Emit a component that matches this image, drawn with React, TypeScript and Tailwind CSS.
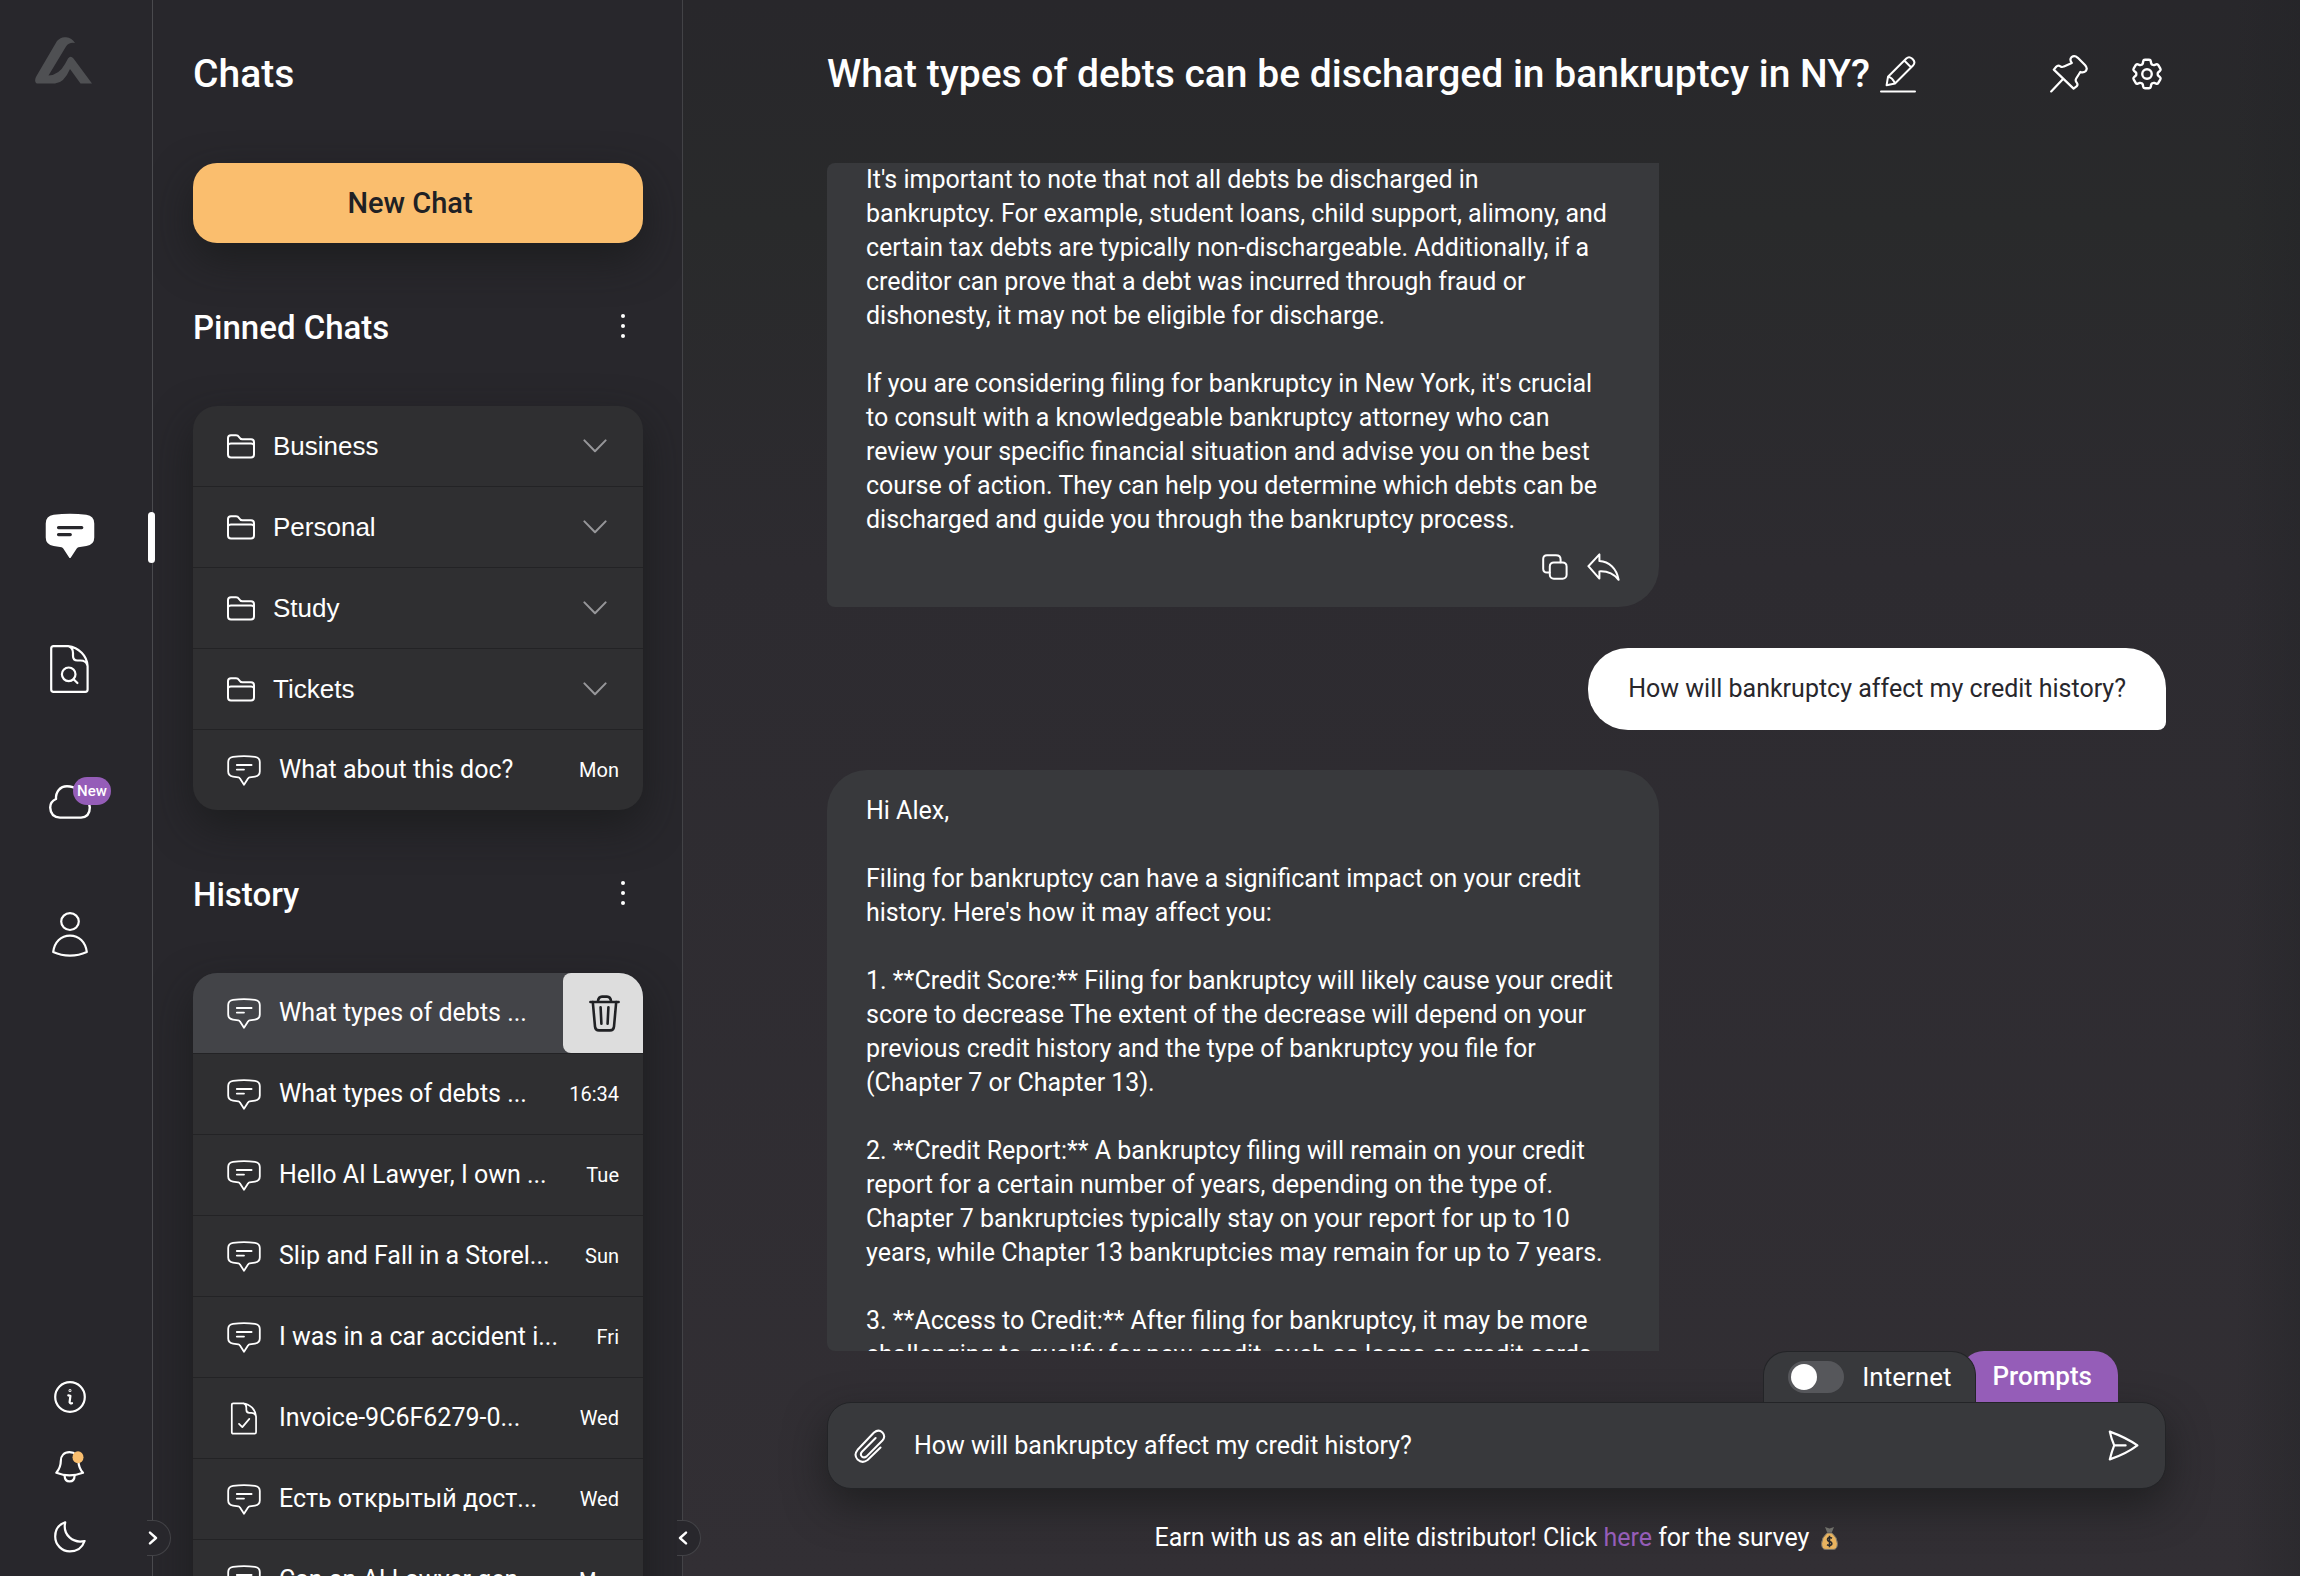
import { useState } from 'react';
import { HiOutlineCog6Tooth } from 'react-icons/hi2';

type IconKind = 'chat' | 'doc';

interface HistoryItem {
  title: string;
  date: string;
  icon: IconKind;
}

const FOLDERS = ['Business', 'Personal', 'Study', 'Tickets'];

const HISTORY: HistoryItem[] = [
  { title: 'What types of debts ...', date: '', icon: 'chat' },
  { title: 'What types of debts ...', date: '16:34', icon: 'chat' },
  { title: 'Hello AI Lawyer, I own ...', date: 'Tue', icon: 'chat' },
  { title: 'Slip and Fall in a Storel...', date: 'Sun', icon: 'chat' },
  { title: 'I was in a car accident i...', date: 'Fri', icon: 'chat' },
  { title: 'Invoice-9C6F6279-0...', date: 'Wed', icon: 'doc' },
  { title: 'Есть открытый дост...', date: 'Wed', icon: 'chat' },
  { title: 'Can an AI Lawyer gen...', date: 'Mon', icon: 'chat' },
];

const FIRST_ANSWER = `It's important to note that not all debts be discharged in
bankruptcy. For example, student loans, child support, alimony, and
certain tax debts are typically non-dischargeable. Additionally, if a
creditor can prove that a debt was incurred through fraud or
dishonesty, it may not be eligible for discharge.

If you are considering filing for bankruptcy in New York, it's crucial
to consult with a knowledgeable bankruptcy attorney who can
review your specific financial situation and advise you on the best
course of action. They can help you determine which debts can be
discharged and guide you through the bankruptcy process.`;

const SECOND_ANSWER = `Hi Alex,

Filing for bankruptcy can have a significant impact on your credit
history. Here's how it may affect you:

1. **Credit Score:** Filing for bankruptcy will likely cause your credit
score to decrease The extent of the decrease will depend on your
previous credit history and the type of bankruptcy you file for
(Chapter 7 or Chapter 13).

2. **Credit Report:** A bankruptcy filing will remain on your credit
report for a certain number of years, depending on the type of.
Chapter 7 bankruptcies typically stay on your report for up to 10
years, while Chapter 13 bankruptcies may remain for up to 7 years.

3. **Access to Credit:** After filing for bankruptcy, it may be more
challenging to qualify for new credit, such as loans or credit cards.`;

const stroke = {
  fill: 'none',
  stroke: 'currentColor',
  strokeLinecap: 'round',
  strokeLinejoin: 'round',
} as const;

const BUBBLE =
  'M6 1.8Q17 .4 28 1.8Q32.8 2.5 32.8 7V16.5Q32.8 20.8 28 21.6Q24 22.2 22.6 22.4Q21.6 22.6 21 23.6L17 29.8L13 23.6Q12.4 22.6 11.4 22.4Q10 22.2 6 21.6Q1.2 20.8 1.2 16.5V7Q1.2 2.5 6 1.8Z';

function Logo() {
  return (
    <svg width="57" height="47" viewBox="0 0 57 47" fill="#4f5053" role="img" aria-label="AI Lawyer">
      <path d="M1 46Q-1 43 1.5 39L22 4Q26 -.5 31 .3Q37 1 40 6Q34 5 31 9.5L13.5 38.5Q24 38 30 27L33 21.5Q35.5 18 38.5 21.5L57 46.5H45.5L35 32Q29 46 20 46.5H3Q2 46.5 1 46Z" />
    </svg>
  );
}

function ChatFilledIcon() {
  return (
    <svg width="50" height="46" viewBox="0 0 34 31">
      <path d={BUBBLE} fill="#fff" stroke="#fff" strokeWidth="1.4" strokeLinejoin="round" />
      <path d="M9.2 9.8H25M9.2 14.5H17.2" stroke="#28272c" strokeWidth="2.2" strokeLinecap="round" />
    </svg>
  );
}

function ChatIcon() {
  return (
    <svg width="34" height="31" viewBox="0 0 34 31" strokeWidth="1.8" {...stroke}>
      <path d={BUBBLE} />
      <path d="M9.8 10H24.6M9.8 14.6H17" />
    </svg>
  );
}

const SHEET =
  'M3.5 1.2H18C29 2.5 37 11 37.6 21V44.5Q37.6 46.8 35.3 46.8H3.5Q1.2 46.8 1.2 44.5V3.5Q1.2 1.2 3.5 1.2ZM19 1.5Q23 3 23 8V11Q23 15.5 27.5 15.5H30.5Q36 15.5 37.4 20.5';

function DocSearchIcon() {
  return (
    <svg width="40" height="48" viewBox="0 0 40 48" strokeWidth="2.2" {...stroke}>
      <path d={SHEET} />
      <circle cx="18.7" cy="29.3" r="6.8" />
      <path d="M23.6 34.2L27.4 38" />
    </svg>
  );
}

function DocCheckIcon() {
  return (
    <svg width="34" height="33" viewBox="-6 0 51 48" strokeWidth="2.6" {...stroke}>
      <path d={SHEET} />
      <path d="M12 32L17 37L27.5 24.5" />
    </svg>
  );
}

function CloudIcon() {
  return (
    <svg width="42" height="34" viewBox="0 0 42 34" strokeWidth="2.4" {...stroke}>
      <path d="M11 32.6H32Q40.8 32 40.8 22.5Q40 15 34 13C33 6 26 1.2 18 1.2C11 1.2 6.6 7 7 14Q1.2 16.5 1.2 22.5Q1.5 32 11 32.6Z" />
    </svg>
  );
}

function UserIcon() {
  return (
    <svg width="36" height="45" viewBox="0 0 36 45" strokeWidth="2.2" {...stroke}>
      <ellipse cx="18" cy="9.6" rx="8.8" ry="8.4" />
      <path d="M1.2 40C2.5 30 9 23.6 18 23.6C27 23.6 33.5 30 34.8 40Q27 43.6 18 43.6Q9 43.6 1.2 40Z" />
    </svg>
  );
}

function InfoIcon() {
  return (
    <svg width="32" height="32" viewBox="0 0 32 32" strokeWidth="2.2" {...stroke}>
      <circle cx="16" cy="16" r="14.8" />
      <circle cx="16" cy="9.6" r="0.4" />
      <path d="M14.3 14.4L16.4 14.8L15.6 21.2Q16 22.8 18 22.2" />
    </svg>
  );
}

function BellIcon() {
  return (
    <svg width="30" height="32" viewBox="0 0 30 32" strokeWidth="2.2" {...stroke}>
      <path d="M14.5 1.2C9 1.2 5.8 5 5.8 10C5.8 16 4 18.5 1.4 21.8Q8 24.4 14.5 24.4Q21 24.4 28 21.8C25 18.5 23.6 15 23.4 10C23.4 5 20 1.2 14.5 1.2Z" />
      <path d="M9.6 24.6Q9.8 30.4 14.6 30.4Q19.4 30.4 19.6 24.6" />
      <ellipse cx="23" cy="6.2" rx="5.5" ry="6" fill="#fabe6e" stroke="none" />
    </svg>
  );
}

function MoonIcon() {
  return (
    <svg width="32" height="32" viewBox="0 0 32 32" strokeWidth="2.2" {...stroke}>
      <path d="M11.2 1.4C4.5 3.5 1.2 9 1.2 15.5C1.2 24 8 30.4 15.8 30.4C23 30.4 28.4 26.4 30.6 20C19 22.6 8.5 14 11.2 1.4Z" />
    </svg>
  );
}

function FolderIcon() {
  return (
    <svg width="28" height="25" viewBox="0 0 28 25" strokeWidth="2" {...stroke}>
      <path d="M1 20.6V4Q1 1.2 4 1.2H9Q11 1.2 12 3Q13.2 5.2 15.4 5.2H24Q27 5.2 27 8.2V20.6Q27 23.6 24 23.6H4Q1 23.6 1 20.6Z" />
      <path d="M1.2 11Q1.6 9.4 4 9.4H24Q26.4 9.4 26.8 11" />
    </svg>
  );
}

function ChevronIcon() {
  return (
    <svg width="24" height="14" viewBox="0 0 24 14" strokeWidth="2" {...stroke}>
      <path d="M1.4 1.4L12 12.2L22.6 1.4" />
    </svg>
  );
}

function TrashIcon() {
  return (
    <svg width="31" height="37" viewBox="0 0 31 37" strokeWidth="2.6" {...stroke}>
      <path d="M1.4 7H29.6M8.8 6.8Q9.4 1.6 13 1.6H18Q21.6 1.6 22.2 6.8" />
      <path d="M3.8 7L6 31.6Q6.4 35.4 10 35.4H21Q24.6 35.4 25 31.6L27.2 7" />
      <path d="M11.6 12.4L12.4 28.6M19.4 12.4L18.6 28.6" />
    </svg>
  );
}

function PencilIcon() {
  return (
    <svg width="36" height="37" viewBox="0 0 36 37" strokeWidth="2" {...stroke}>
      <path d="M6.6 29.2L8 20.8L26.3 2.5Q29 0 32 2.5L33 3.5Q35.8 6.5 33 9.5L15 27.5ZM24.5 4.8L31 11.3M8 20.8Q12.5 21.5 15 27.5M1 35.6H35" />
    </svg>
  );
}

function PinIcon() {
  return (
    <svg width="38" height="38" viewBox="0 0 38 38" strokeWidth="2.2" {...stroke}>
      <path d="M21.8 8Q19.2 4.5 21.5 2.2Q24.5 0 27.8 2.8L35 10Q38 13.3 35.8 16Q33.5 18.3 30.3 17L26.2 23.5Q25 25.6 26.6 27.4Q28.4 29.6 26.5 31.4L23.6 33.6L3.8 14.6L6.2 11.8Q8 9.8 10.4 11.4Q12 12.6 14 11.4Z" />
      <path d="M12.8 24.2L1.2 36.4" />
    </svg>
  );
}

function CopyIcon() {
  return (
    <svg width="26" height="26" viewBox="0 0 26 26" strokeWidth="2" {...stroke}>
      <rect x="7.8" y="8.4" width="16.8" height="16.4" rx="4" />
      <path d="M7.6 18.6H5Q1.2 18.6 1.2 14.8V5Q1.2 1.2 5 1.2H14Q18.6 1.2 18.6 5.4V8.2" />
    </svg>
  );
}

function ReplyIcon() {
  return (
    <svg width="33" height="28" viewBox="0 0 33 28" strokeWidth="2" {...stroke}>
      <path d="M1.4 13.2L12.4 1.4V8C22 8.6 29.5 15 31.6 26.8C26 19.8 20 18 12.4 18.4V25.6Z" />
    </svg>
  );
}

function ClipIcon() {
  return (
    <svg width="32" height="34" viewBox="0 0 32 34" strokeWidth="2" {...stroke}>
      <path d="M26.5 18.5L13.6 31Q8.4 35 3.6 30.6Q-.6 26 3.6 20.8L20 3.5Q24.5 -.2 28.4 3.4Q32 7.5 28.4 11.5L12.6 27.4Q10 29.4 7.8 27.4Q5.8 25.2 8 22.8L21.6 9" />
    </svg>
  );
}

function SendIcon() {
  return (
    <svg width="31" height="31" viewBox="0 0 31 31" strokeWidth="2.2" {...stroke}>
      <path d="M1.8 1.6Q18 7.5 29.4 15.4Q18 24 1.8 29.4Q3.6 22 6.2 15.4Q3.2 8.4 1.8 1.6ZM6.4 15.4H17.6" />
    </svg>
  );
}

function MoneyBagIcon() {
  return (
    <svg width="17" height="24" viewBox="0 0 17 24" role="img" aria-label="Money bag">
      <path d="M4 1L8.5 2.4L13 1L10.8 6.4H6.2Z" fill="#6f6f6a" />
      <path d="M6.2 7H10.8Q16.4 11.4 16.4 17.6Q16.4 23.4 12.6 23.4H4.4Q.6 23.4 .6 17.6Q.6 11.4 6.2 7Z" fill="#e9b35f" stroke="#77746c" />
      <path d="M11 12.2Q8.5 10.8 6.8 12.4Q5.8 14.8 8.5 15.4Q11.6 16.2 10.6 18.6Q8.8 20.2 6 18.8M8.5 9.8V21.2" stroke="#2b2b2d" strokeWidth="1.6" fill="none" />
    </svg>
  );
}

function MoreButton({ label }: { label: string }) {
  return (
    <button type="button" aria-label={label} className="w-10 h-9 flex flex-col items-center justify-center gap-1.5">
      <span className="w-1 h-1 rounded-full bg-white" />
      <span className="w-1 h-1 rounded-full bg-white" />
      <span className="w-1 h-1 rounded-full bg-white" />
    </button>
  );
}

function CollapseButton({ direction }: { direction: 'left' | 'right' }) {
  return (
    <button
      type="button"
      aria-label={direction === 'right' ? 'Expand menu' : 'Collapse chats'}
      className="absolute z-10 -right-[19px] bottom-5 w-6 h-9 pl-px flex items-center rounded-r-full border border-l-0 border-[#434347] bg-[#28272c]"
    >
      <svg width="10" height="14" viewBox="0 0 10 14" strokeWidth="2.4" {...stroke}>
        <path d={direction === 'right' ? 'M2 1.6L8 7L2 12.4' : 'M8 1.6L2 7L8 12.4'} />
      </svg>
    </button>
  );
}

function SectionTitle({ title }: { title: string }) {
  return (
    <div className="mt-[65px] mb-[58px] flex items-start justify-between">
      <h2 className="text-[33px] leading-10 font-medium">{title}</h2>
      <MoreButton label={`${title} menu`} />
    </div>
  );
}

function ChatRow({ item, active }: { item: HistoryItem; active?: boolean }) {
  return (
    <li
      className={`h-[81px] last:h-20 shrink-0 flex items-center border-b border-[#232325] last:border-b-0 pl-[34px] ${
        active ? 'bg-[#434448]' : 'pr-6'
      }`}
    >
      <a href="#" className="flex-1 min-w-0 flex items-center gap-[18px]">
        {item.icon === 'doc' ? <DocCheckIcon /> : <ChatIcon />}
        <span className="text-[25px] leading-8 whitespace-nowrap">{item.title}</span>
      </a>
      {active ? (
        <button
          type="button"
          aria-label="Delete chat"
          className="w-20 h-20 pl-0.5 flex items-center justify-center rounded-l-lg bg-[#dddddd] text-[#202124]"
        >
          <TrashIcon />
        </button>
      ) : (
        <span className="text-[20px] leading-8">{item.date}</span>
      )}
    </li>
  );
}

function Rail() {
  return (
    <aside className="relative w-[153px] shrink-0 flex flex-col border-r border-[#4a4a4e]">
      <div className="w-[140px] flex-1 flex flex-col items-center">
        <div className="w-full pl-[35px] pt-[37px]">
          <Logo />
        </div>
        <nav className="mt-[385px] w-full flex flex-col">
          <a href="#" aria-label="Chats" className="h-[133px] flex items-center justify-center">
            <ChatFilledIcon />
          </a>
          <a href="#" aria-label="Documents" className="h-[133px] flex items-center justify-center">
            <DocSearchIcon />
          </a>
          <a href="#" aria-label="Cloud" className="h-[133px] flex items-center justify-center">
            <span className="relative">
              <CloudIcon />
              <span className="absolute -top-2 left-6 h-7 px-1 rounded-full bg-[#955db8] text-[15px] leading-7 font-medium">
                New
              </span>
            </span>
          </a>
          <a href="#" aria-label="Profile" className="h-[133px] flex items-center justify-center">
            <UserIcon />
          </a>
        </nav>
        <div className="mt-auto mb-1 w-full flex flex-col">
          <button type="button" aria-label="Information" className="h-[70px] flex items-center justify-center">
            <InfoIcon />
          </button>
          <button type="button" aria-label="Notifications" className="h-[70px] flex items-center justify-center">
            <BellIcon />
          </button>
          <button type="button" aria-label="Dark theme" className="h-[70px] flex items-center justify-center">
            <MoonIcon />
          </button>
        </div>
      </div>
      <span className="absolute top-[512px] -right-[3px] w-[7px] h-[51px] rounded-full bg-white" />
      <CollapseButton direction="right" />
    </aside>
  );
}

function Sidebar() {
  return (
    <section className="relative w-[530px] shrink-0 border-r border-[#434347]">
      <div className="h-full overflow-hidden pl-10 pr-[39px] pt-12 flex flex-col">
        <h1 className="text-[39px] leading-[52px] font-medium">Chats</h1>
        <button
          type="button"
          className="mt-[63px] h-20 shrink-0 pt-0.5 pr-4 rounded-3xl bg-[#fabe6e] text-[#202124] text-[29px] font-medium shadow-[0_16px_40px_rgba(24,25,26,0.7)]"
        >
          New Chat
        </button>

        <SectionTitle title="Pinned Chats" />
        <ul className="shrink-0 rounded-3xl overflow-hidden bg-[#2f2f31] shadow-[0_16px_40px_rgba(24,25,26,0.7)]">
          {FOLDERS.map(name => (
            <li key={name} className="h-[81px] border-b border-[#232325]">
              <button type="button" className="w-full h-full pl-[34px] pr-9 flex items-center">
                <FolderIcon />
                <span className="ml-[18px] font-['Liberation_Sans',sans-serif] text-[26px] leading-8">{name}</span>
                <span className="ml-auto text-[#97979a]">
                  <ChevronIcon />
                </span>
              </button>
            </li>
          ))}
          <ChatRow item={{ title: 'What about this doc?', date: 'Mon', icon: 'chat' }} />
        </ul>

        <SectionTitle title="History" />
        <ul className="shrink-0 rounded-3xl overflow-hidden bg-[#2f2f31] shadow-[0_16px_40px_rgba(24,25,26,0.7)]">
          {HISTORY.map((item, index) => (
            <ChatRow key={index} item={item} active={index === 0} />
          ))}
        </ul>
      </div>
      <CollapseButton direction="left" />
    </section>
  );
}

function Composer() {
  const [text, setText] = useState('How will bankruptcy affect my credit history?');
  const [internet, setInternet] = useState(false);

  return (
    <form onSubmit={e => e.preventDefault()}>
      <div className="pr-12 flex justify-end">
        <label
          htmlFor="internet"
          className="relative z-10 h-[51px] pl-6 pr-6 flex items-center gap-[18px] rounded-t-3xl border border-b-0 border-[#232427] bg-[#38393c] text-[26px]"
        >
          <input
            id="internet"
            type="checkbox"
            checked={internet}
            onChange={e => setInternet(e.target.checked)}
            className="appearance-none w-14 h-8 p-[3px] rounded-full bg-[#56575b] before:block before:w-[26px] before:h-[26px] before:rounded-full before:bg-white checked:before:ml-6"
          />
          Internet
        </label>
        <button
          type="button"
          className="-ml-4 h-[51px] pl-8 pr-[26px] rounded-t-3xl bg-[#955db8] text-[26px] font-medium"
        >
          Prompts
        </button>
      </div>
      <div className="h-[87px] pl-[26px] pr-[26px] flex items-center gap-7 rounded-3xl border border-[#232427] bg-[#38393c] shadow-[0_16px_40px_rgba(24,25,26,0.7)]">
        <button type="button" aria-label="Attach a file">
          <ClipIcon />
        </button>
        <input
          type="text"
          aria-label="Message"
          value={text}
          onChange={e => setText(e.target.value)}
          className="flex-1 min-w-0 bg-transparent outline-none text-[25px] leading-[34px]"
        />
        <button type="submit" aria-label="Send">
          <SendIcon />
        </button>
      </div>
    </form>
  );
}

export default function App() {
  return (
    <div className="h-screen flex overflow-hidden bg-[#28272c] text-white font-[Roboto,sans-serif]">
      <Rail />
      <Sidebar />
      <main className="flex-1 min-w-0 pl-36 pr-[134px] flex flex-col bg-[linear-gradient(to_right,transparent_96%,rgba(34,35,38,0.4)),linear-gradient(to_bottom,#28272b,#292a2b_14%,#2d2b30_36%,#322f34)]">
        <header className="h-[163px] pt-12 shrink-0 flex items-start justify-between">
          <div className="h-[52px] flex items-center gap-2.5">
            <h2 className="text-[39px] leading-[52px] font-medium whitespace-nowrap">
              What types of debts can be discharged in bankruptcy in NY?
            </h2>
            <button type="button" aria-label="Rename chat">
              <PencilIcon />
            </button>
          </div>
          <div className="h-[52px] flex items-center gap-10">
            <button type="button" aria-label="Pin chat">
              <PinIcon />
            </button>
            <button type="button" aria-label="Settings">
              <HiOutlineCog6Tooth className="w-[38px] h-[38px]" />
            </button>
          </div>
        </header>

        <div className="flex-1 min-h-0 overflow-hidden flex flex-col rounded-l-lg">
          <article className="shrink-0 w-[832px] px-[39px] pb-[25px] rounded-bl-lg rounded-br-[40px] bg-[#38393c]">
            <p className="text-[25px] leading-[34px] whitespace-pre">{FIRST_ANSWER}</p>
            <div className="mt-[15px] h-[30px] flex items-center justify-end gap-[19px]">
              <button type="button" aria-label="Copy">
                <CopyIcon />
              </button>
              <button type="button" aria-label="Reply">
                <ReplyIcon />
              </button>
            </div>
          </article>
          <article className="shrink-0 self-end mt-[41px] px-10 py-6 rounded-[40px] rounded-br-lg bg-white text-[#28272c]">
            <p className="text-[25px] leading-[34px]">How will bankruptcy affect my credit history?</p>
          </article>
          <article className="shrink-0 w-[832px] mt-10 px-[39px] py-6 rounded-[40px] bg-[#38393c]">
            <p className="text-[25px] leading-[34px] whitespace-pre">{SECOND_ANSWER}</p>
          </article>
        </div>

        <Composer />

        <p className="mt-8 mb-[21px] flex items-center justify-center gap-3 text-[25px] leading-[34px]">
          <span>
            Earn with us as an elite distributor! Click{' '}
            <a href="#" className="text-[#955db8]">
              here
            </a>{' '}
            for the survey
          </span>
          <MoneyBagIcon />
        </p>
      </main>
    </div>
  );
}
